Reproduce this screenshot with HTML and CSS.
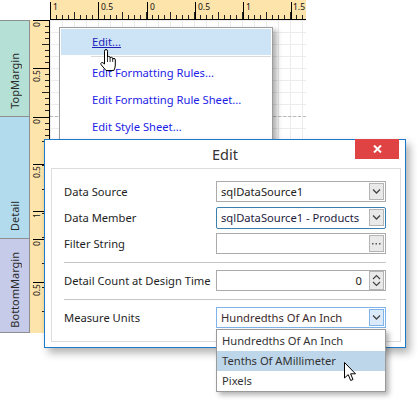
FILE: index.html
```html
<!DOCTYPE html>
<html lang="en">
<head>
    <meta charset="UTF-8">
    <title>Report Designer - Edit</title>
    <link rel="stylesheet" href="styles.css">
</head>
<body>
<div class="designer">
    <div class="ruler-row">
        <div class="corner"></div>
        <svg class="hruler" width="256" height="20" viewBox="0 0 256 20">
            <defs>
                <pattern id="hmin" x="0" y="0" width="6" height="20" patternUnits="userSpaceOnUse">
                    <rect x="0" y="15" width="1" height="4" fill="#222"/>
                </pattern>
                <pattern id="hmid" x="0" y="0" width="24" height="20" patternUnits="userSpaceOnUse">
                    <rect x="0" y="12" width="1" height="7" fill="#222"/>
                </pattern>
            </defs>
            <rect width="256" height="20" fill="#fce4aa"/>
            <rect width="256" height="20" fill="url(#hmin)"/>
            <rect width="256" height="20" fill="url(#hmid)"/>
            <rect y="19" width="256" height="1" fill="#000"/>
            <g fill="#000">
                <rect x="0" y="2" width="1" height="17"/>
                <rect x="48" y="2" width="1" height="17"/>
                <rect x="97" y="2" width="1" height="17"/>
                <rect x="145" y="2" width="1" height="17"/>
                <rect x="193" y="2" width="1" height="17"/>
                <rect x="241" y="2" width="1" height="17"/>
            </g>
            <g class="rtext">
                <text x="3" y="10">1</text>
                <text x="51" y="10">0.5</text>
                <text x="100" y="10">0</text>
                <text x="148" y="10">0.5</text>
                <text x="196" y="10">1</text>
                <text x="243" y="10">1.5</text>
            </g>
        </svg>
    </div>
    <div class="work">
        <div class="bands">
            <div class="band band-top"><span>TopMargin</span></div>
            <div class="band band-detail"><span>Detail</span></div>
            <div class="band band-bottom"><span>BottomMargin</span></div>
        </div>
        <svg class="vruler" width="20" height="313" viewBox="0 0 20 313">
            <defs>
                <pattern id="vmin" x="0" y="0" width="20" height="6" patternUnits="userSpaceOnUse">
                    <rect x="15" y="0" width="4" height="1" fill="#222"/>
                </pattern>
                <pattern id="vmid" x="0" y="0" width="20" height="24" patternUnits="userSpaceOnUse">
                    <rect x="12" y="0" width="7" height="1" fill="#222"/>
                </pattern>
            </defs>
            <rect width="20" height="313" fill="#fce4aa"/>
            <rect width="20" height="96" fill="url(#vmin)"/>
            <rect width="20" height="96" fill="url(#vmid)"/>
            <g transform="translate(0 97)">
                <rect width="20" height="121" fill="url(#vmin)"/>
                <rect width="20" height="121" fill="url(#vmid)"/>
            </g>
            <g transform="translate(0 219)">
                <rect width="20" height="94" fill="url(#vmin)"/>
                <rect width="20" height="94" fill="url(#vmid)"/>
            </g>
            <rect x="19" width="1" height="313" fill="#000"/>
            <g fill="#000">
                <rect x="3" y="0" width="16" height="1"/>
                <rect x="3" y="48" width="16" height="1"/>
                <rect x="3" y="97" width="16" height="1"/>
                <rect x="3" y="144" width="16" height="1"/>
                <rect x="3" y="191" width="16" height="1"/>
                <rect x="3" y="219" width="16" height="1"/>
                <rect x="3" y="262" width="16" height="1"/>
            </g>
            <g class="rtext" text-anchor="end">
                <text transform="translate(9.5 2) rotate(-90)">0</text>
                <text transform="translate(9.5 50) rotate(-90)">0.5</text>
                <text transform="translate(9.5 99) rotate(-90)">0</text>
                <text transform="translate(9.5 146) rotate(-90)">0.5</text>
                <text transform="translate(9.5 193) rotate(-90)">1</text>
                <text transform="translate(9.5 221) rotate(-90)">0</text>
                <text transform="translate(9.5 264) rotate(-90)">0.5</text>
            </g>
        </svg>
        <div class="canvas">
            <div class="area area-top"></div>
            <div class="area area-detail"></div>
            <div class="area area-bottom"></div>
        </div>
    </div>
</div>

<!-- menu de tareas del control -->
<div class="menu">
    <div class="menu-item active"><a>Edit...</a></div>
    <div class="menu-sep"></div>
    <div class="menu-item"><a>Edit Formatting Rules...</a></div>
    <div class="menu-item"><a>Edit Formatting Rule Sheet...</a></div>
    <div class="menu-item"><a>Edit Style Sheet...</a></div>
</div>

<svg class="hand-cursor" width="20" height="24" viewBox="0 0 20 24">
    <path d="M5.5 10 V2.2 Q5.5 0.5 7 0.5 Q8.5 0.5 8.5 2.2 V8.5 Q8.5 7.3 9.8 7.3 Q11.1 7.3 11.1 8.8 V9.5 Q11.1 8.3 12.4 8.3 Q13.7 8.3 13.7 9.8 V10.5 Q13.7 9.4 15 9.4 Q16.3 9.4 16.3 11 V16 Q16.3 19 14.8 21.5 H7 L2.2 15.8 Q1.3 14.3 2.6 13.6 Q3.8 13.1 5.5 15 Z" fill="#fff" stroke="#000" stroke-width="1"/>
    <path d="M8.5 9 V13 M11.1 10 V13 M13.7 10.5 V13" stroke="#000" stroke-width="0.8" fill="none"/>
</svg>

<div class="dialog">
    <div class="dialog-title">
        <span>Edit</span>
        <button class="close-btn">
            <svg width="9" height="8" viewBox="0 0 9 8"><path d="M1 0.5 L8 7.5 M8 0.5 L1 7.5" stroke="#fff" stroke-width="2"/></svg>
        </button>
    </div>
    <div class="panel">
        <div class="row">
            <span class="label">Data Source</span>
            <div class="box">
                <span class="value">sqlDataSource1</span>
                <span class="btn"><svg width="9" height="5" viewBox="0 0 9 5"><path d="M1 0.5 L4.5 4 L8 0.5" stroke="#444" stroke-width="1.3" fill="none"/></svg></span>
            </div>
        </div>
        <div class="row">
            <span class="label">Data Member</span>
            <div class="box focused">
                <span class="value member">sqlDataSource1 - Products</span>
                <span class="btn"><svg width="9" height="5" viewBox="0 0 9 5"><path d="M1 0.5 L4.5 4 L8 0.5" stroke="#444" stroke-width="1.3" fill="none"/></svg></span>
            </div>
        </div>
        <div class="row">
            <span class="label">Filter String</span>
            <div class="box">
                <span class="value"></span>
                <span class="btn">
                    <svg width="9" height="3" viewBox="0 0 9 3"><g fill="#555"><rect x="0" y="1" width="1.5" height="1.5"/><rect x="3.5" y="1" width="1.5" height="1.5"/><rect x="7" y="1" width="1.5" height="1.5"/></g></svg>
                </span>
            </div>
        </div>
        <div class="sep"></div>
        <div class="row">
            <span class="label">Detail Count at Design Time</span>
            <div class="box">
                <span class="value num">0</span>
                <span class="btn spin">
                    <svg width="9" height="15" viewBox="0 0 9 15"><path d="M1 6 L4.5 2.5 L8 6 M1 9 L4.5 12.5 L8 9" stroke="#444" stroke-width="1.2" fill="none"/></svg>
                </span>
            </div>
        </div>
        <div class="sep"></div>
        <div class="row">
            <span class="label">Measure Units</span>
            <div class="box open">
                <span class="value units">Hundredths Of An Inch</span>
                <span class="btn"><svg width="9" height="5" viewBox="0 0 9 5"><path d="M1 0.5 L4.5 4 L8 0.5" stroke="#444" stroke-width="1.3" fill="none"/></svg></span>
                <ul class="dropdown">
                    <li>Hundredths Of An Inch</li>
                    <li class="selected">Tenths Of AMillimeter</li>
                    <li>Pixels</li>
                </ul>
            </div>
        </div>
    </div>
</div>

<svg class="arrow-cursor" width="13" height="20" viewBox="0 0 13 20">
    <path d="M0.5 0.5 V16 L4.2 12.6 L6.7 18.5 L9 17.5 L6.6 11.8 H11.5 Z" fill="#fff" stroke="#000" stroke-width="1"/>
</svg>
</body>
</html>
```

FILE: styles.css
```css
body {
    margin: 0;
    width: 417px;
    height: 405px;
    position: relative;
    overflow: hidden;
    background: #fff;
    font-family: "Segoe UI", "Noto Sans", sans-serif;
    font-size: 11.2px;
    color: #1e1e1e;
}

/* superficie del diseñador */
.designer {
    display: flex;
    flex-direction: column;
}

.ruler-row {
    display: flex;
    height: 20px;
}

.corner {
    width: 50px;
}

.hruler,
.vruler {
    display: block;
}

.rtext {
    font-family: "Segoe UI", "Noto Sans", sans-serif;
    font-size: 8.5px;
    fill: #111;
}

.work {
    display: flex;
}

.bands {
    width: 30px;
    display: flex;
    flex-direction: column;
}

.band {
    box-sizing: border-box;
    border-right: 1px solid #8e8e8e;
    border-bottom: 1px solid #8e8e8e;
    display: flex;
    justify-content: center;
    align-items: flex-end;
    padding-bottom: 7px;
    color: #2a2a2a;
    font-size: 11px;
}

.band span {
    writing-mode: vertical-rl;
    transform: rotate(180deg);
}

.band-top {
    height: 97px;
    border-top: 1px solid #8e8e8e;
    background: #b4e0d5;
}

.band-detail {
    height: 122px;
    background: #b2dcee;
}

.band-bottom {
    height: 94px;
    padding-bottom: 4px;
    background: #c5cbe9;
}

.canvas {
    width: 256px;
    height: 313px;
    display: flex;
    flex-direction: column;
    background-color: #fff;
    background-image:
        linear-gradient(#ececec 1px, transparent 1px),
        linear-gradient(90deg, #ececec 1px, transparent 1px);
    background-size: 12px 12px;
}

.area {
    box-sizing: border-box;
    border-bottom: 1px dashed #b8b8b8;
}

.area-top { height: 97px; }
.area-detail { height: 122px; }
.area-bottom { height: 94px; border-bottom: none; }

/* menu contextual */
.menu {
    position: absolute;
    left: 59px;
    top: 27px;
    width: 214px;
    height: 124px;
    box-sizing: border-box;
    padding: 1px;
    background: #fff;
    border: 1px solid #9d9d9d;
    box-shadow: 4px 3px 5px rgba(0, 0, 0, 0.3);
}

.menu-item {
    height: 27px;
    line-height: 27px;
    padding-left: 31px;
    font-size: 11.2px;
}

.menu-item a {
    color: #1c1ce6;
}

.menu-item.active {
    height: 26px;
    line-height: 26px;
    background: #cde4f7;
}

.menu-item.active a {
    color: #1f1fb8;
    text-decoration: underline;
}

.menu-sep {
    height: 1px;
    margin: 1px 0 2px 30px;
    background: #dadada;
}

.hand-cursor {
    position: absolute;
    left: 99px;
    top: 49px;
}

/* dialogo */
.dialog {
    position: absolute;
    left: 44px;
    top: 139px;
    width: 362px;
    height: 209px;
    box-sizing: border-box;
    border: 1px solid #1e78c8;
    background: #fff;
    box-shadow: 4px 5px 8px rgba(0, 0, 0, 0.3);
    display: flex;
    flex-direction: column;
}

.dialog-title {
    height: 28px;
    position: relative;
    display: flex;
    justify-content: center;
    align-items: center;
    font-size: 14.5px;
    color: #333;
    padding-bottom: 1px;
    box-sizing: border-box;
}

.close-btn {
    position: absolute;
    top: -1px;
    right: 6px;
    width: 44px;
    height: 20px;
    border: none;
    padding: 0;
    background: #e04343;
    display: flex;
    justify-content: center;
    align-items: center;
}

.panel {
    flex: 1;
    margin: 0 4px 5px 6px;
    border: 1px solid #dcdcdc;
    padding: 12px 14px 0 12px;
}

.row {
    display: flex;
    align-items: center;
    height: 21px;
    margin-bottom: 5px;
}

.label {
    width: 152px;
}

.box {
    position: relative;
    width: 170px;
    height: 21px;
    box-sizing: border-box;
    border: 1px solid #ababab;
    display: flex;
    align-items: center;
    padding: 0 1px 0 4px;
}

.box.focused {
    height: 22px;
    border-color: #3c7fb1;
    border-radius: 2px;
}

.box.open {
    border-color: #7eb4ea;
}

.value {
    flex: 1;
    color: #222;
    white-space: nowrap;
}

.value.member {
    color: #241c40;
}

.value.units {
    color: #3a2a2a;
}

.value.num {
    text-align: right;
    padding-right: 7px;
}

.btn {
    width: 15px;
    height: 17px;
    box-sizing: border-box;
    border: 1px solid #b4b4b4;
    background: #e9e9e9;
    display: flex;
    justify-content: center;
    align-items: center;
}

.btn.spin {
    height: 19px;
}

.box.open .btn {
    border-color: #7eb4ea;
    background: #dbeafa;
}

.sep {
    height: 1px;
    background: #c6c6c6;
    margin: 8px 0 7px;
}

.dropdown {
    position: absolute;
    left: -1px;
    top: 21px;
    width: 170px;
    margin: 0;
    padding: 1px 0 0;
    box-sizing: border-box;
    list-style: none;
    background: #fff;
    border: 1px solid #9a9a9a;
    box-shadow: 3px 3px 5px rgba(0, 0, 0, 0.3);
}

.dropdown li {
    height: 20px;
    line-height: 20px;
    padding-left: 5px;
    color: #333;
}

.dropdown li.selected {
    background: #bdd6ea;
}

.arrow-cursor {
    position: absolute;
    left: 344px;
    top: 362px;
}
```
